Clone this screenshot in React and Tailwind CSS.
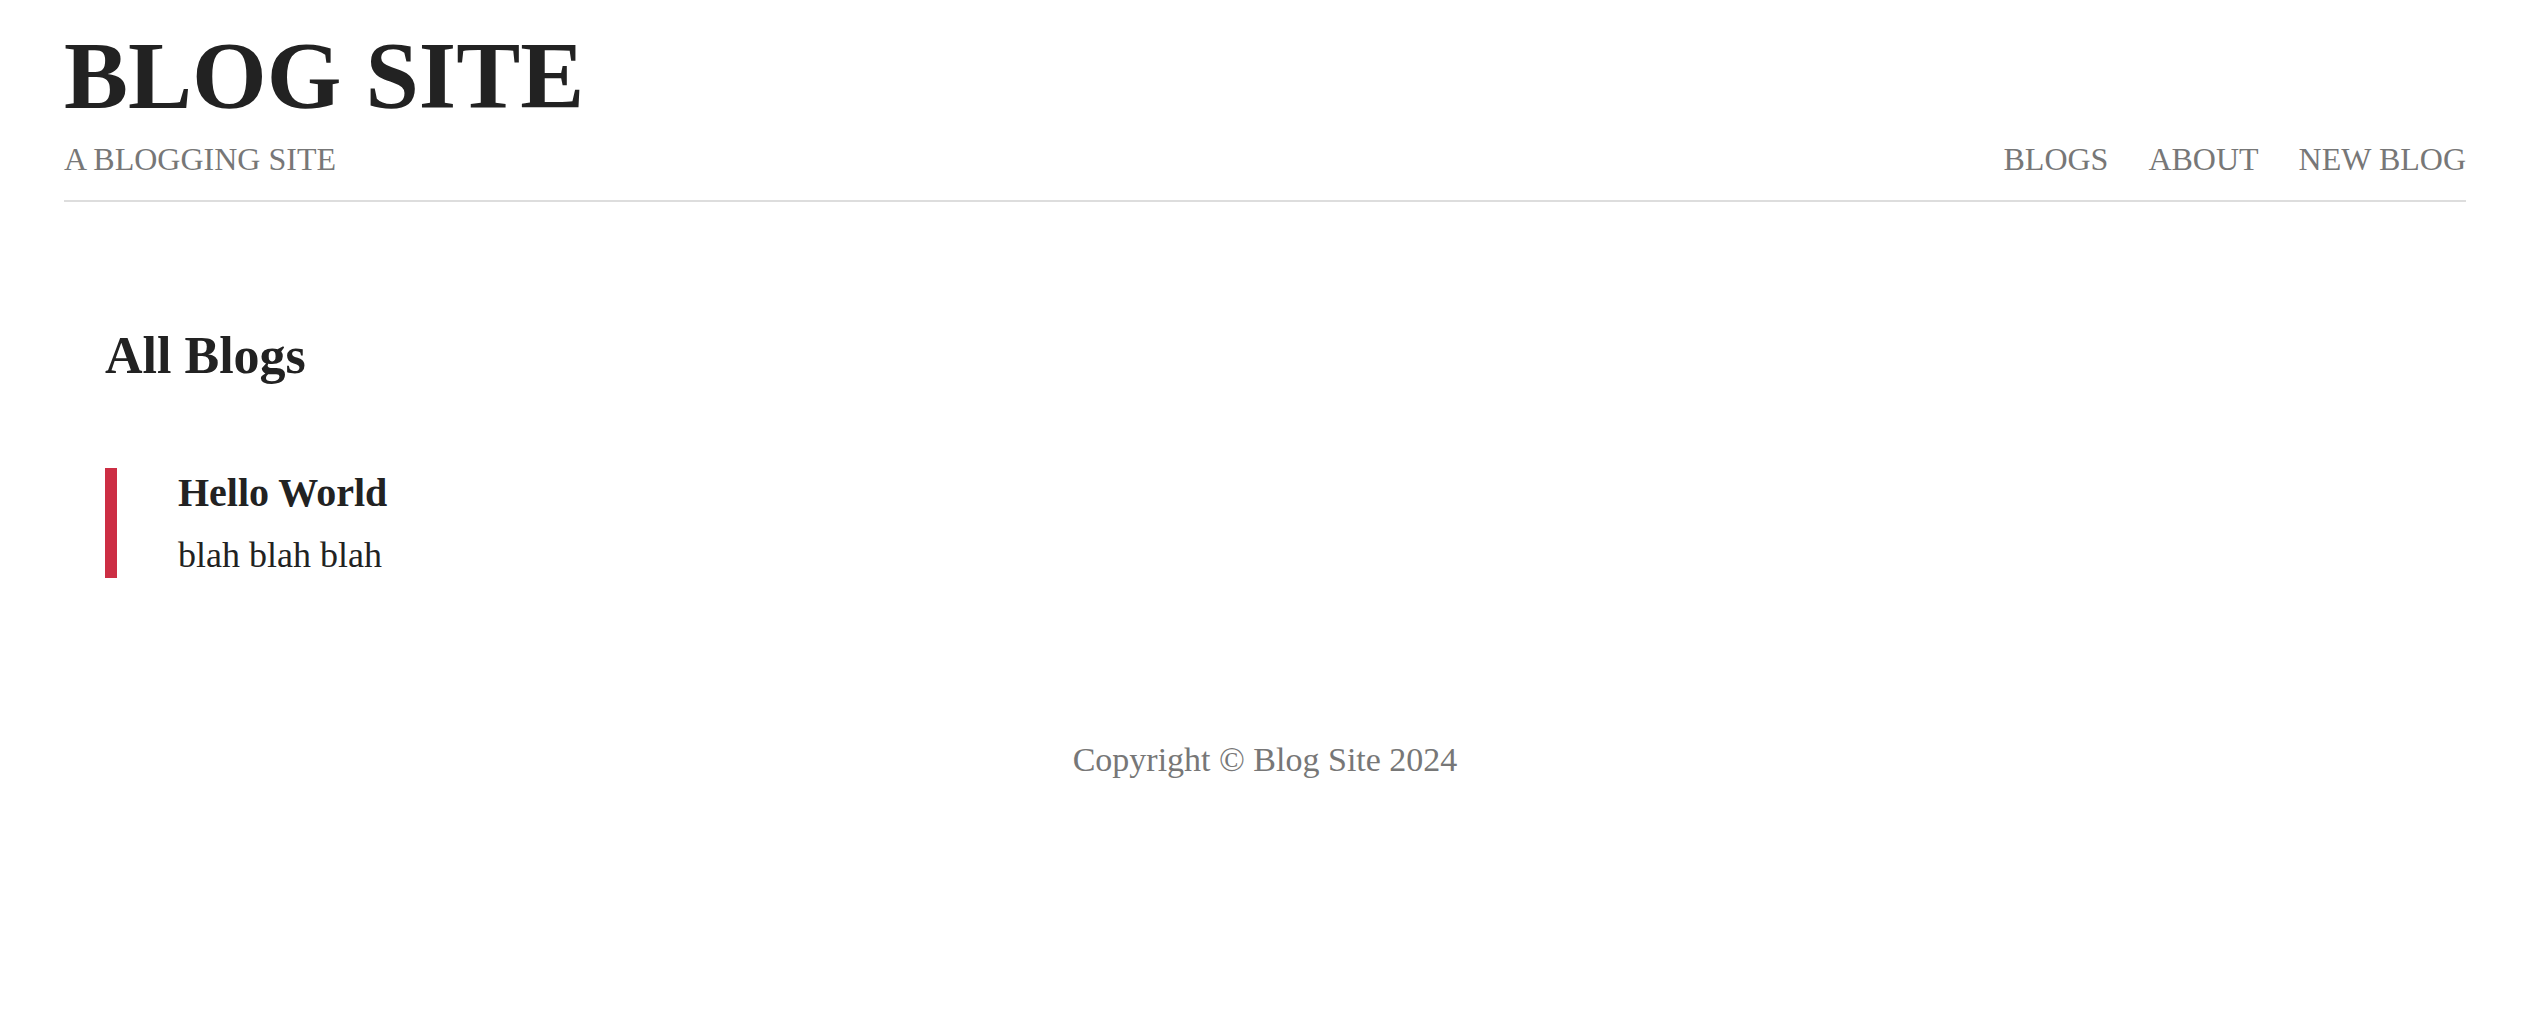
import React from "react";

const posts = [{ id: 1, title: "Hello World", body: "blah blah blah" }];

const navLinks = ["BLOGS", "ABOUT", "NEW BLOG"];

export default function App() {
  return (
    <div className="min-h-screen bg-white text-[#222] font-['Liberation_Serif','Times_New_Roman',serif]">
      <header className="mx-16 pt-7 pb-[25px] border-b-2 border-[#dddddd]">
        <h1 className="text-[96px] font-bold leading-none">BLOG SITE</h1>
        <div className="mt-[19px] flex items-end justify-between text-[32px] leading-none text-[#777]">
          <p>A BLOGGING SITE</p>
          <nav className="flex gap-10">
            {navLinks.map(link => (
              <a key={link} href="#" className="hover:text-[#222]">
                {link}
              </a>
            ))}
          </nav>
        </div>
      </header>

      <main className="px-[105px] pt-[128px]">
        <h2 className="text-[52px] font-bold leading-none">All Blogs</h2>
        <div className="mt-[86px] flex flex-col gap-10">
          {posts.map(post => (
            <div key={post.id} className="border-l-[12px] border-[#cc2e44] pl-[61px] pt-[5px] pb-[5px]">
              <h3 className="text-[40px] font-bold leading-none">{post.title}</h3>
              <p className="mt-[24px] text-[36px] leading-none">{post.body}</p>
            </div>
          ))}
        </div>
      </main>

      <footer className="mt-[165px] text-center text-[34px] leading-none text-[#777]">
        Copyright © Blog Site 2024
      </footer>
    </div>
  );
}
